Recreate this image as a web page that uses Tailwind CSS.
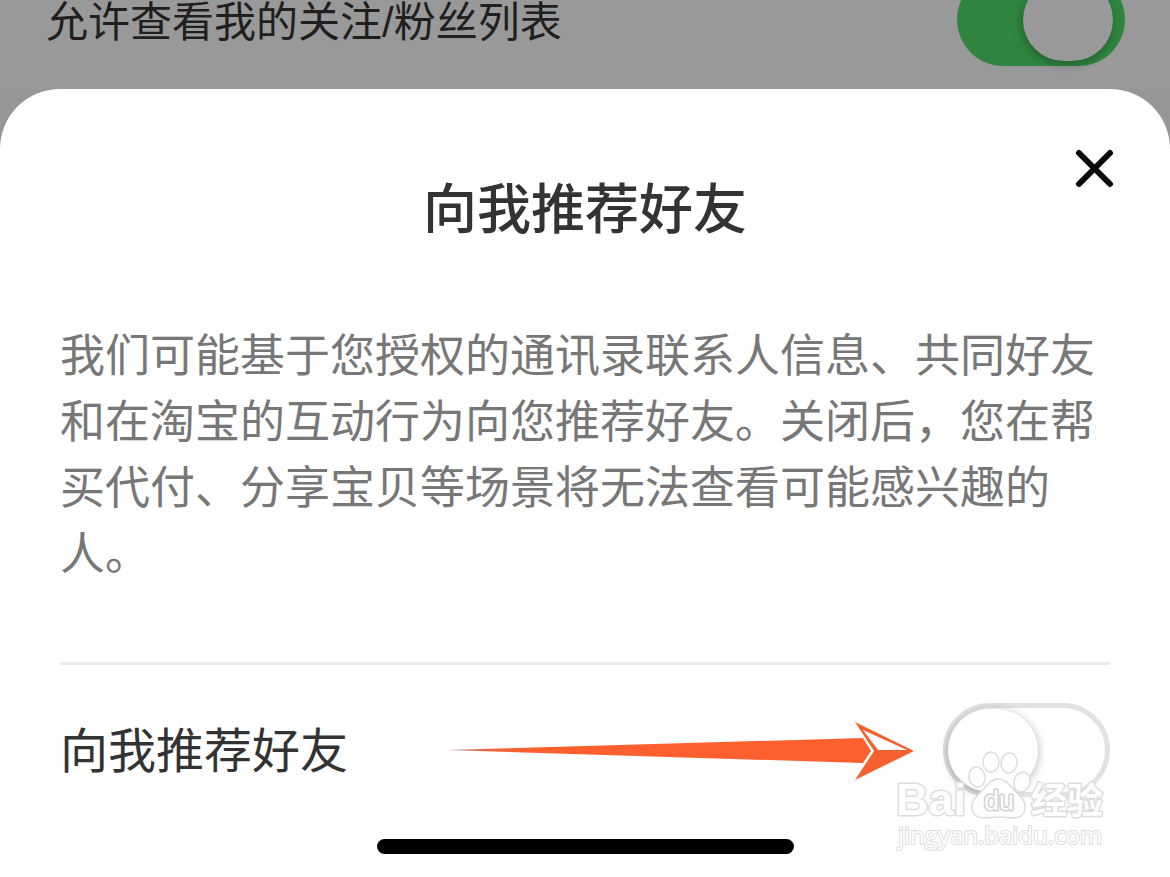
<!DOCTYPE html>
<html lang="zh-CN">
<head>
<meta charset="utf-8">
<meta name="viewport" content="width=device-width, initial-scale=1">
<title>向我推荐好友</title>
<script src="https://cdn.jsdelivr.net/npm/@tailwindcss/browser@4"></script>
</head>
<body class="flex min-h-screen flex-col overflow-x-hidden bg-[#969696] font-['Noto_Sans_CJK_SC',sans-serif]">
  <header class="flex h-[89px] items-start justify-between bg-[#999999] pr-[45px] pl-[46px]">
    <label for="follow-list" class="font-['Liberation_Sans','Noto_Sans_CJK_SC',sans-serif] text-[42px] leading-[46px] text-[#1f1f1f]">允许查看我的关注/粉丝列表</label>
    <input id="follow-list" type="checkbox" checked class="-mt-[27px] flex h-[93px] w-[168px] shrink-0 appearance-none items-center justify-end rounded-full bg-[#2f8540] pr-3 before:h-[82px] before:w-[90px] before:rounded-full before:bg-[#999999] before:shadow-[-1px_3px_10px_rgba(0,0,0,0.3)] before:content-['']">
  </header>

  <main class="relative flex flex-1 flex-col rounded-t-[60px] bg-white px-[60px] pt-[77px]">
    <button type="button" aria-label="关闭" class="absolute top-[60px] right-14 size-10 text-[#0a0a0a]">
      <svg viewBox="0 0 40 40" class="size-10" fill="none" stroke="currentColor" stroke-width="6" stroke-linecap="round"><path d="M5 4 36 35M36 4 5 35"/></svg>
    </button>

    <h1 class="text-center text-[54px] leading-20 font-medium text-[#333333]">向我推荐好友</h1>
    <p class="mt-[74px] text-[45px] leading-[66px] text-[#777777]">我们可能基于您授权的通讯录联系人信息、共同好友和在淘宝的互动行为向您推荐好友。关闭后，您在帮买代付、分享宝贝等场景将无法查看可能感兴趣的人。</p>

    <div class="mt-[78px] flex items-center border-t-3 border-[#ebebeb] pt-[38px]">
      <label for="recommend" class="shrink-0 pb-1.5 text-[48px] leading-[72px] text-[#333333]">向我推荐好友</label>
      <svg viewBox="0 0 470 60" class="mr-7 ml-auto h-[60px] w-[470px]" aria-hidden="true">
        <defs>
          <linearGradient id="shaft" x1="0" x2="1" y1="0" y2="0"><stop offset="0" stop-color="#a09a98"/><stop offset=".1" stop-color="#e8633a"/><stop offset=".2" stop-color="#fd602e"/></linearGradient>
        </defs>
        <path fill="url(#shaft)" d="M0 30 418 18 426 31 418 43Z"/>
        <path fill="#f5602f" fill-rule="evenodd" d="M410 2 469 31 410 60 429 31ZM418 10 433 30H462Z"/>
      </svg>
      <input id="recommend" type="checkbox" class="flex h-[94px] w-[167px] shrink-0 appearance-none items-center rounded-full border-5 border-[#e2e2e2] bg-white before:h-[83px] before:w-[90px] before:rounded-full before:bg-white before:shadow-[0_2px_10px_rgba(0,0,0,0.3)] before:content-['']">
    </div>

    <div class="mx-auto mt-auto mb-[23px] h-[15px] w-[417px] rounded-full bg-black"></div>

    <svg viewBox="0 0 220 110" class="pointer-events-none absolute right-[60px] bottom-[21px] h-[110px] w-[220px]" fill="#ffffff" stroke="#dddddd" stroke-width="1.5" stroke-linejoin="round" aria-hidden="true">
      <text x="6" y="69" font-family="Liberation Sans" font-weight="700" font-size="45" stroke-width="3" paint-order="stroke">Bai</text>
      <ellipse cx="87" cy="31" rx="8" ry="10" transform="rotate(-12 87 31)"/>
      <ellipse cx="101" cy="16" rx="8" ry="10"/>
      <ellipse cx="119" cy="17" rx="8" ry="10" transform="rotate(8 119 17)"/>
      <ellipse cx="132" cy="36" rx="8" ry="10" transform="rotate(18 132 36)"/>
      <path d="M108 33C100 33 96 41 91 46C85 51 79 58 83 66C88 75 98 71 109 71C120 71 130 75 134 66C138 57 131 51 126 46C120 40 117 33 108 33Z"/>
      <text x="94" y="64" font-family="Liberation Sans" font-weight="400" font-size="27" stroke="#cfcfcf" stroke-width="3" paint-order="stroke">du</text>
      <text x="141" y="68" font-family="Noto Sans CJK SC" font-weight="700" font-size="36" stroke-width="3" paint-order="stroke">经验</text>
      <text x="8" y="98" font-family="Open Sans" font-size="24" font-weight="400" stroke-width="2" paint-order="stroke">jingyan.baidu.com</text>
    </svg>
  </main>
</body>
</html>
